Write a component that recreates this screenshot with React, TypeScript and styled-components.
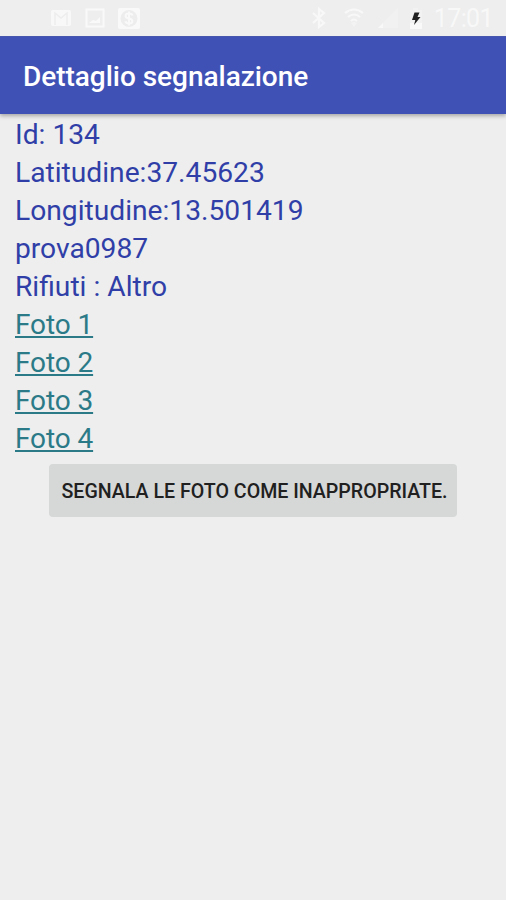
import React from "react";
import styled, { createGlobalStyle } from "styled-components";

const GlobalStyle = createGlobalStyle`
  body {
    margin: 0;
    background: #eeeeee;
    font-family: Roboto, sans-serif;
  }
`;

const Screen = styled.div`
  display: flex;
  flex-direction: column;
  width: 506px;
  height: 900px;
  overflow: hidden;
  background: #eeeeee;
`;

const StatusBar = styled.div`
  display: flex;
  justify-content: space-between;
  flex: none;
  height: 36px;
  box-sizing: border-box;
  padding: 0 13px 0 49px;
  color: #f8f8f8;
`;

const StatusGroup = styled.div<{ $gap: number }>`
  display: flex;
  align-items: center;
  gap: ${(p) => p.$gap}px;
`;

const StatusSlot = styled.span<{ $left?: number; $right?: number }>`
  display: flex;
  margin-left: ${(p) => p.$left ?? 0}px;
  margin-right: ${(p) => p.$right ?? 0}px;
`;

const Clock = styled.span`
  margin-left: -4px;
  padding-top: 2px;
  font-size: 25px;
  line-height: 36px;
  letter-spacing: -0.6px;
`;

const AppBar = styled.header`
  display: flex;
  align-items: center;
  flex: none;
  height: 78px;
  box-sizing: border-box;
  padding: 2px 23px 0;
  background: #3f51b5;
  border-top: 1px solid #4656ad;
  box-shadow: 0 2px 4px rgba(0, 0, 0, 0.3);
  clip-path: inset(0 0 -8px 0);
`;

const Title = styled.h1`
  margin: 0;
  color: #ffffff;
  font-size: 28px;
  font-weight: 500;
  line-height: 36px;
  letter-spacing: -0.03px;
  white-space: nowrap;
`;

const Details = styled.main`
  display: flex;
  flex-direction: column;
  align-items: flex-start;
  padding: 2px 15px 0;
`;

const Line = styled.div`
  height: 38px;
  color: #303fa8;
  font-size: 28.2px;
  line-height: 38px;
  white-space: nowrap;
`;

const PhotoLink = styled.a`
  height: 38px;
  color: #2b7a88;
  font-size: 28px;
  line-height: 38px;
  letter-spacing: -0.1px;
  white-space: nowrap;
  text-decoration: underline;
  text-decoration-thickness: 1.5px;
  text-underline-offset: 2px;
  text-decoration-skip-ink: none;
`;

const ReportButton = styled.button`
  align-self: center;
  width: 408px;
  height: 53px;
  margin: 6px 0 0;
  padding: 2px 0 0 3px;
  border: 0;
  border-radius: 4px;
  background: #d6d7d7;
  color: #202020;
  font-family: inherit;
  font-size: 19.6px;
  font-weight: 500;
  white-space: nowrap;
`;

const MailIcon = () => (
  <svg width="23" height="20" viewBox="0 0 23 20">
    <rect x="2" y="2" width="20" height="16" rx="2" fill="#f8f8f8" />
    <path d="M6 17V5l6 5 6-5v12" fill="none" stroke="#ededed" strokeWidth="1.500" />
  </svg>
);

const PictureIcon = () => (
  <svg width="20" height="20" viewBox="0 0 20 20">
    <rect x="1.500" y="1.500" width="17" height="17" fill="none" stroke="#f9f9f9" strokeWidth="2" />
    <path d="M4 15l4-3 3 1 4-4v6z" fill="#f9f9f9" />
  </svg>
);

const CoinIcon = () => (
  <svg width="22" height="21" viewBox="0 0 22 21">
    <rect width="22" height="21" rx="2" fill="#f9f9f9" />
    <circle cx="11" cy="10.500" r="8.500" fill="#ededed" />
    <path
      d="M14.500 7.500c-.5-1.500-1.800-2-3.500-2-4.500 0-4.500 4.500 0 5s4.500 5 0 5c-1.900 0-3.200-.7-3.600-2.300M11 3.500v14"
      fill="none"
      stroke="#f9f9f9"
      strokeWidth="2"
    />
  </svg>
);

const BluetoothIcon = () => (
  <svg width="16" height="22" viewBox="0 0 16 22">
    <path d="M2 6l11 10-5 4V2l5 4L2 16" fill="none" stroke="#f8f8f8" strokeWidth="2.200" />
  </svg>
);

const WifiIcon = () => (
  <svg width="20" height="20" viewBox="0 0 20 20">
    <g fill="none" stroke="#f8f8f8" strokeWidth="2">
      <path d="M1 5q9-7 18 0M4 9q6-5 12 0M7 13q3-3 6 0" />
    </g>
    <path d="M10 19l-3-4q3-2 6 0z" fill="#f3f3f3" />
  </svg>
);

const SignalIcon = () => (
  <svg width="20" height="20" viewBox="0 0 20 20">
    <path d="M0 20L20 0v20z" fill="#f1f1f1" />
    <path d="M0 20l5-5v5z" fill="#f8f8f8" />
  </svg>
);

const BatteryIcon = () => (
  <svg width="14" height="21" viewBox="0 0 14 21">
    <path d="M4 0h5v2h4v19H1V2h3z" fill="#f2f2f2" />
    <path d="M1 15h12v6H1z" fill="#f9f9f9" />
    <path d="M5.500 4.500h5L8.500 9h3L5 17l1.300-5H3z" fill="#222222" />
  </svg>
);

const details = [
  "Id: 134",
  "Latitudine:37.45623",
  "Longitudine:13.501419",
  "prova0987",
  "Rifiuti : Altro",
];

const photos = ["Foto 1", "Foto 2", "Foto 3", "Foto 4"];

export default function App() {
  return (
    <Screen>
      <GlobalStyle />
      <StatusBar>
        <StatusGroup $gap={13}>
          <MailIcon />
          <PictureIcon />
          <CoinIcon />
        </StatusGroup>
        <StatusGroup $gap={15}>
          <BluetoothIcon />
          <StatusSlot $left={2}>
            <WifiIcon />
          </StatusSlot>
          <StatusSlot $left={-1} $right={-4}>
            <SignalIcon />
          </StatusSlot>
          <BatteryIcon />
          <Clock>17:01</Clock>
        </StatusGroup>
      </StatusBar>
      <AppBar>
        <Title>Dettaglio segnalazione</Title>
      </AppBar>
      <Details>
        {details.map((text) => (
          <Line key={text}>{text}</Line>
        ))}
        {photos.map((text) => (
          <PhotoLink key={text} href="#">
            {text}
          </PhotoLink>
        ))}
        <ReportButton type="button">SEGNALA LE FOTO COME INAPPROPRIATE.</ReportButton>
      </Details>
    </Screen>
  );
}
